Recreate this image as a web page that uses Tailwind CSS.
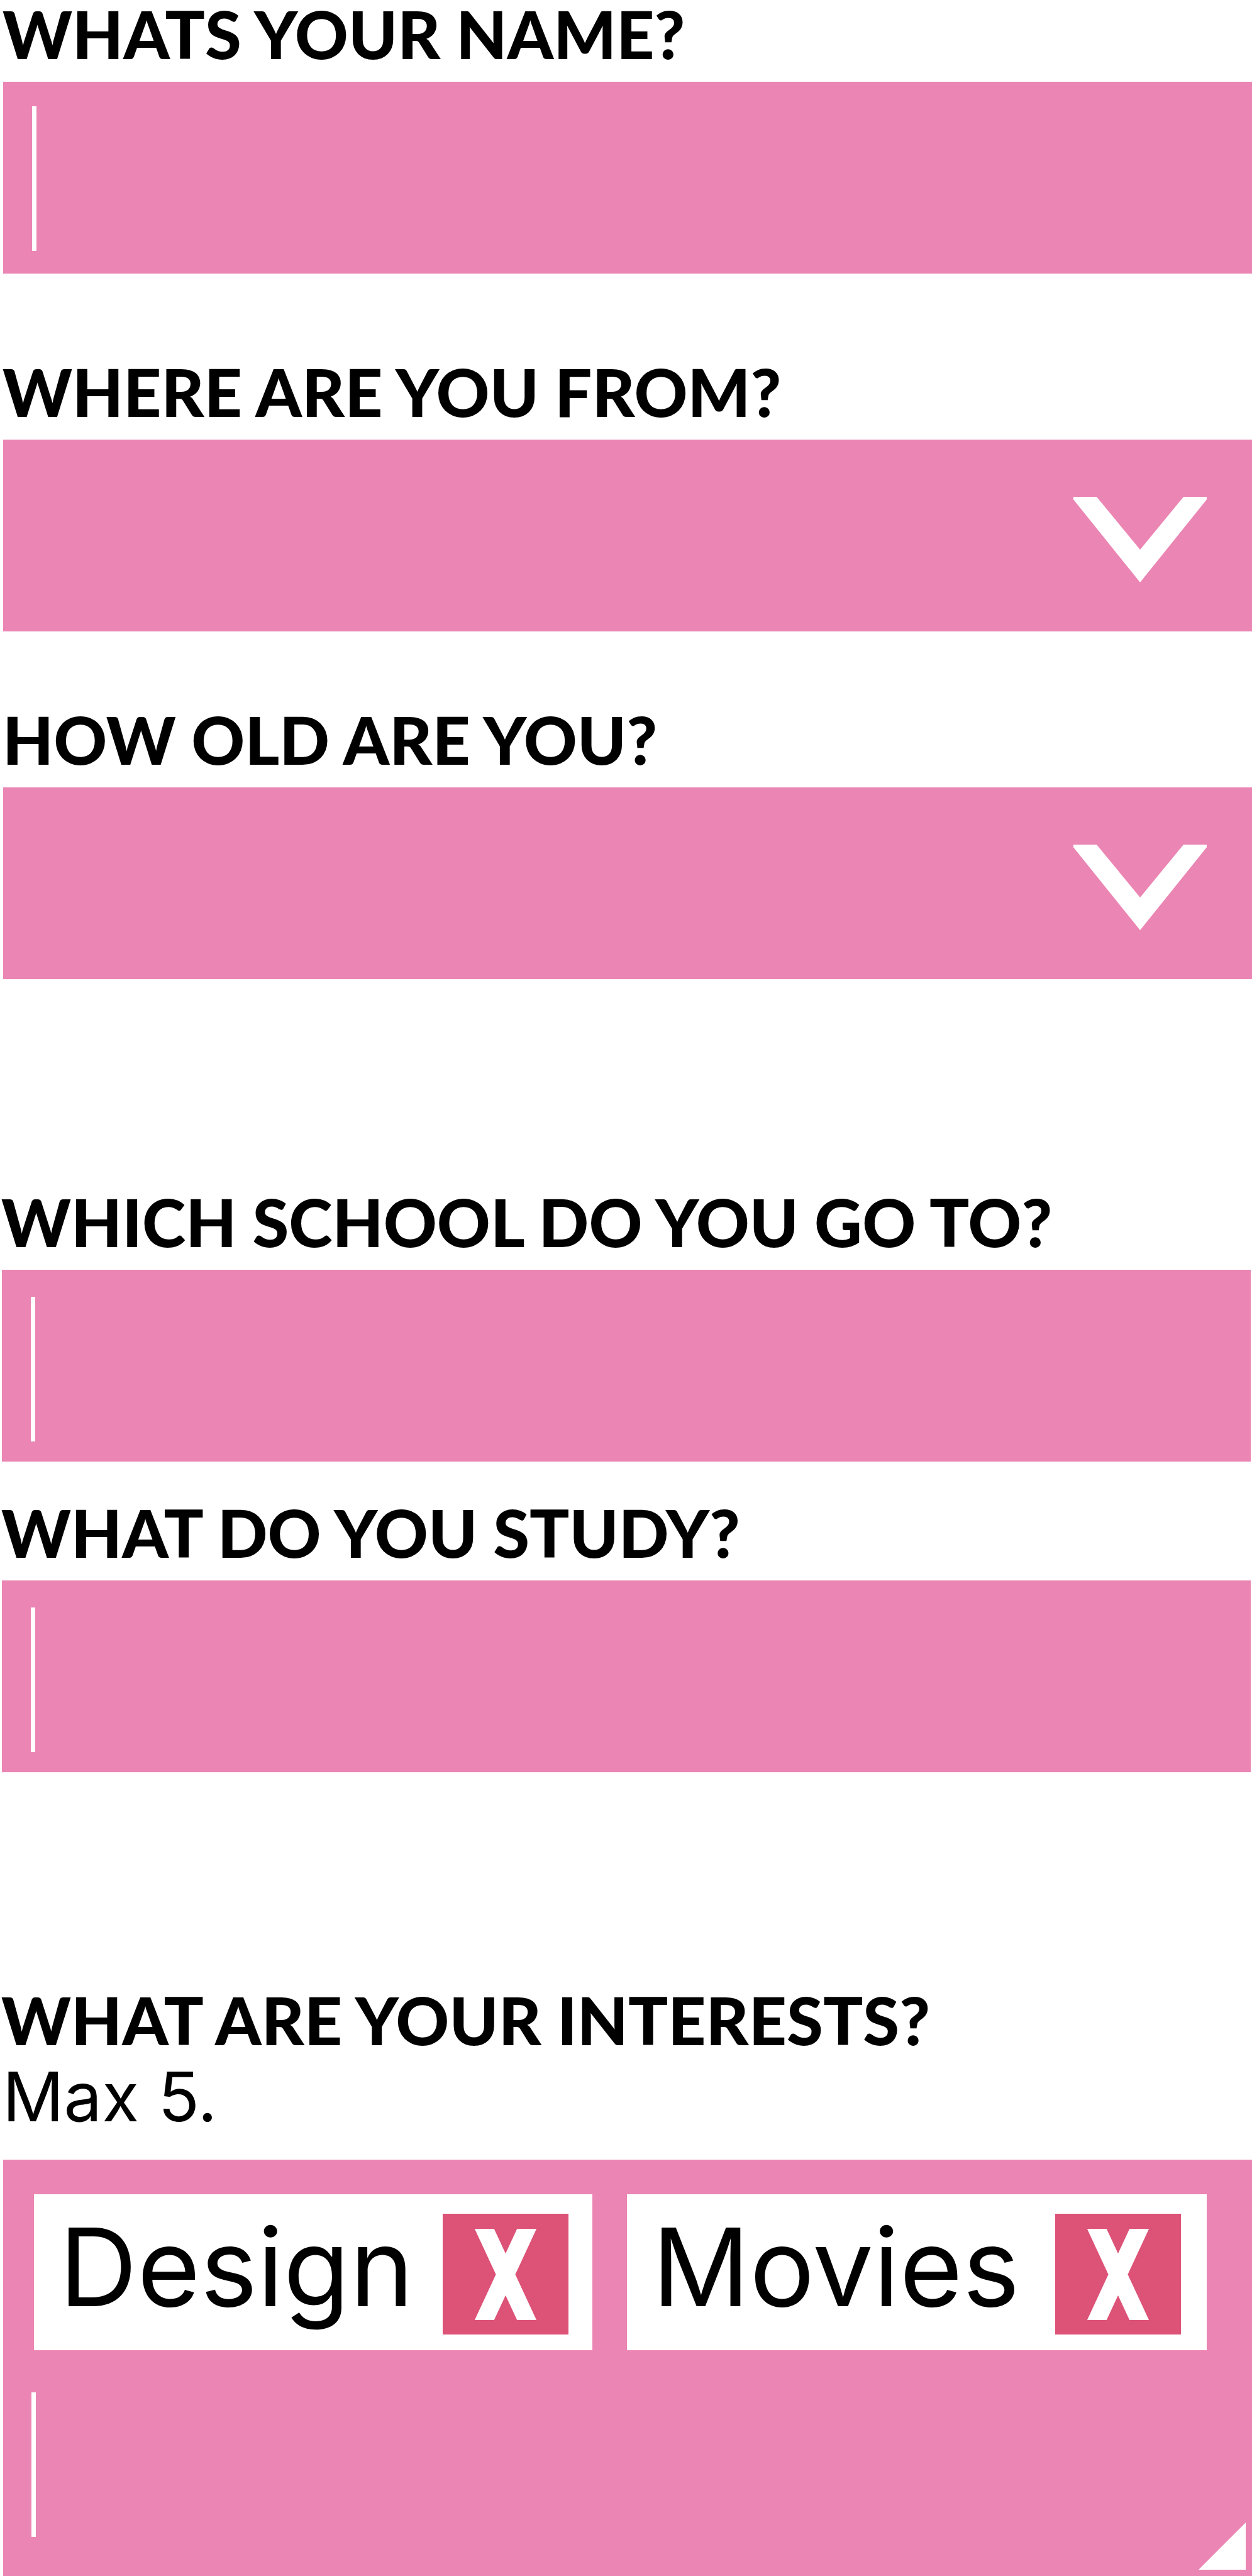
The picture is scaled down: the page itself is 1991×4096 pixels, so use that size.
<!DOCTYPE html>
<html lang="en">
<head>
<meta charset="utf-8">
<meta name="viewport" content="width=device-width, initial-scale=1">
<title>About you</title>
<script src="https://cdn.jsdelivr.net/npm/@tailwindcss/browser@4"></script>
</head>
<body class="bg-white text-black">
<form class="flex min-h-screen flex-col font-['Lato',sans-serif]">

  <section>
    <label for="name" class="block pb-6 pl-1 text-[105px] leading-[106px] font-black whitespace-nowrap">WHATS YOUR NAME?</label>
    <div class="ml-[5px] flex h-[305px] bg-[#eb85b3] pt-[39px] pl-[46px]">
      <span class="h-[230px] w-[7px] bg-white"></span>
      <input id="name" type="text" class="h-[230px] min-w-0 flex-1 bg-transparent px-6 font-['Inter',sans-serif] text-[172px] text-white caret-transparent outline-none">
    </div>
  </section>

  <section class="mt-[134px]">
    <label for="country" class="block pb-6 pl-1 text-[105px] leading-[106px] font-black whitespace-nowrap">WHERE ARE YOU FROM?</label>
    <div class="relative ml-[5px] h-[305px] bg-[#eb85b3]">
      <select id="country" class="h-full w-full appearance-none bg-transparent px-12 font-['Inter',sans-serif] text-[172px] text-white outline-none">
        <option value=""></option>
      </select>
      <svg class="pointer-events-none absolute top-[91px] right-[72px] h-[136px] w-[212px] fill-white" viewBox="0 0 247 158.5" aria-hidden="true"><path d="M0 0H43L123.6 98L204 0H247V5L123.6 158.5L0 5Z"/></svg>
    </div>
  </section>

  <section class="mt-[118px]">
    <label for="age" class="block pb-6 pl-1 text-[105px] leading-[106px] font-black whitespace-nowrap">HOW OLD ARE YOU?</label>
    <div class="relative ml-[5px] h-[305px] bg-[#eb85b3]">
      <select id="age" class="h-full w-full appearance-none bg-transparent px-12 font-['Inter',sans-serif] text-[172px] text-white outline-none">
        <option value=""></option>
      </select>
      <svg class="pointer-events-none absolute top-[91px] right-[72px] h-[136px] w-[212px] fill-white" viewBox="0 0 247 158.5" aria-hidden="true"><path d="M0 0H43L123.6 98L204 0H247V5L123.6 158.5L0 5Z"/></svg>
    </div>
  </section>

  <section class="mt-[332px]">
    <label for="school" class="block pb-6 pl-[2px] text-[105px] leading-[106px] font-black whitespace-nowrap">WHICH SCHOOL DO YOU GO TO?</label>
    <div class="mr-[2px] ml-[3px] flex h-[305px] bg-[#eb85b3] pt-[43px] pl-[46px]">
      <span class="h-[230px] w-[7px] bg-white"></span>
      <input id="school" type="text" class="h-[230px] min-w-0 flex-1 bg-transparent px-6 font-['Inter',sans-serif] text-[172px] text-white caret-transparent outline-none">
    </div>
  </section>

  <section class="mt-[59px]">
    <label for="study" class="block pb-6 pl-[2px] text-[105px] leading-[106px] font-black whitespace-nowrap">WHAT DO YOU STUDY?</label>
    <div class="mr-[2px] ml-[3px] flex h-[305px] bg-[#eb85b3] pt-[43px] pl-[46px]">
      <span class="h-[230px] w-[7px] bg-white"></span>
      <input id="study" type="text" class="h-[230px] min-w-0 flex-1 bg-transparent px-6 font-['Inter',sans-serif] text-[172px] text-white caret-transparent outline-none">
    </div>
  </section>

  <section class="mt-[340px] flex flex-1 flex-col">
    <label for="interests" class="block pl-[2px] text-[105px] leading-[106px] font-black whitespace-nowrap">WHAT ARE YOUR INTERESTS?</label>
    <p class="pb-[30px] pl-1 font-['Inter',sans-serif] text-[108px] leading-[140px]">Max 5.</p>
    <div class="relative ml-[5px] flex-1 bg-[#eb85b3] pt-[55px] pr-[72px] pb-[62px] pl-[45px]">
      <ul class="ml-1 flex flex-wrap gap-[55px] font-['Inter',sans-serif] text-[172px]">
        <li class="flex h-[248px] w-[888px] items-start justify-between bg-white pr-[38px] pl-10">
          <span class="leading-[230px]">Design</span>
          <button type="button" aria-label="Remove Design" class="mt-[31px] flex h-[192px] w-[200px] items-center justify-center bg-[#dd5277]">
            <svg class="h-[145px] w-[98px] stroke-white" viewBox="0 0 98 145" stroke-width="28" aria-hidden="true"><path d="M6 -20L92 165M92 -20L6 165"/></svg>
          </button>
        </li>
        <li class="flex h-[248px] w-[922px] items-start justify-between bg-white pr-[41px] pl-10">
          <span class="leading-[230px]">Movies</span>
          <button type="button" aria-label="Remove Movies" class="mt-[31px] flex h-[192px] w-[200px] items-center justify-center bg-[#dd5277]">
            <svg class="h-[145px] w-[98px] stroke-white" viewBox="0 0 98 145" stroke-width="28" aria-hidden="true"><path d="M6 -20L92 165M92 -20L6 165"/></svg>
          </button>
        </li>
      </ul>
      <div class="mt-[67px] flex h-[230px]">
        <span class="h-full w-[7px] bg-white"></span>
        <input id="interests" type="text" class="h-full min-w-0 flex-1 bg-transparent px-6 font-['Inter',sans-serif] text-[172px] text-white caret-transparent outline-none">
      </div>
      <svg class="absolute right-[10px] bottom-[10px] h-[75px] w-[75px] fill-white" viewBox="0 0 75 75" aria-hidden="true"><path d="M75 0V75H0Z"/></svg>
    </div>
  </section>

</form>
</body>
</html>
